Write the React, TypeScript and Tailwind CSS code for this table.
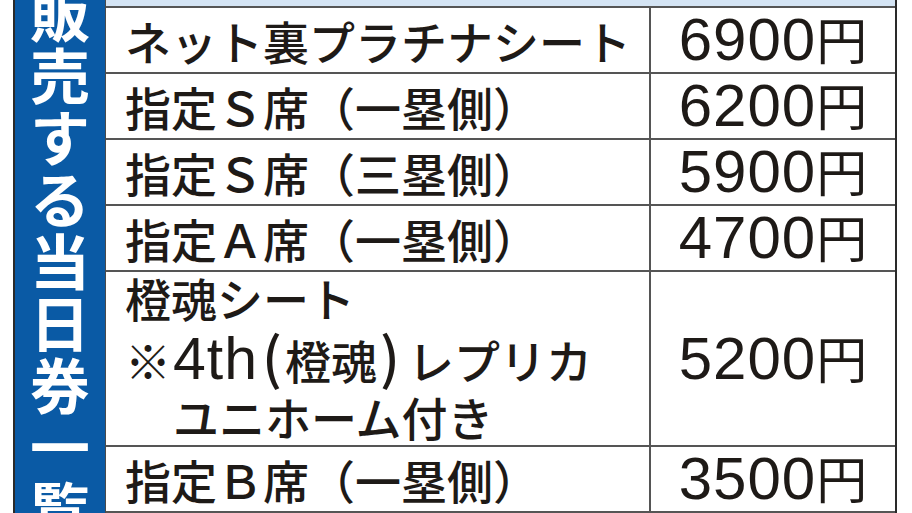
const TITLE = ["販", "売", "す", "る", "当", "日", "券", "一", "覧"];

type Row = { seat: React.ReactNode; price: string; tall?: boolean };

const ROWS: Row[] = [
  { seat: "ネット裏プラチナシート", price: "6900" },
  { seat: "指定Ｓ席（一塁側）", price: "6200" },
  { seat: "指定Ｓ席（三塁側）", price: "5900" },
  { seat: "指定Ａ席（一塁側）", price: "4700" },
  {
    seat: (
      <div className="flex flex-col leading-[57px] -mt-[4px]">
        <span>橙魂シート</span>
        <span className="flex items-baseline">
          <span>※</span>
          <span className="text-[59px] font-['Liberation_Sans',sans-serif] tracking-[1px] pl-[2px]">4th</span>
          <span className="text-[56px] pl-[4px] pr-[3px]">(</span>
          <span>橙魂</span>
          <span className="text-[56px] pl-[3px] pr-[8px]">)</span>
          <span>レプリカ</span>
        </span>
        <span className="pl-[48px]">ユニホーム付き</span>
      </div>
    ),
    price: "5200",
    tall: true,
  },
  { seat: "指定Ｂ席（一塁側）", price: "3500" },
];

function Price({ value }: { value: string }) {
  return (
    <span className="flex items-baseline leading-none whitespace-nowrap">
      <span className="text-[60px] font-['Liberation_Sans',sans-serif] tracking-[1px]">{value}</span>
      <span className="text-[51px]">円</span>
    </span>
  );
}

export default function App() {
  return (
    <div className="w-[912px] h-[513px] overflow-hidden bg-white text-[#1e1a17] font-['Noto_Sans_CJK_JP','Noto_Sans',sans-serif]">
      <div className="ml-[13px] w-[884px] h-full flex border-x-2 border-[#2a2a2a]">
        {/* ── Vertical title ── */}
        <aside className="w-[91px] shrink-0 bg-[#0a5aa5] border-r border-[#4a4a4a] flex flex-col items-center text-white text-[60px] font-bold leading-none">
          <div className="-mt-[20px] flex flex-col">
            {TITLE.map((c, i) => (
              <span key={i} className="h-[62px] w-[62px] flex items-center justify-center">
                {c}
              </span>
            ))}
          </div>
        </aside>

        {/* ── Price table ── */}
        <div className="flex-1 flex flex-col">
          <div className="h-[8px] shrink-0 bg-[#d4e4f4] border-b-2 border-[#555]" />
          {ROWS.map((r, i) => (
            <div
              key={i}
              className={`grid grid-cols-[543px_1fr] shrink-0 border-b-2 border-[#555] ${r.tall ? "h-[175px]" : "h-[66px]"}`}
            >
              <div className="flex items-center pl-[19px] text-[46px] font-medium leading-none whitespace-nowrap">
                {r.seat}
              </div>
              <div className="flex items-center justify-center border-l-2 border-[#555]">
                <Price value={r.price} />
              </div>
            </div>
          ))}
        </div>
      </div>
    </div>
  );
}
